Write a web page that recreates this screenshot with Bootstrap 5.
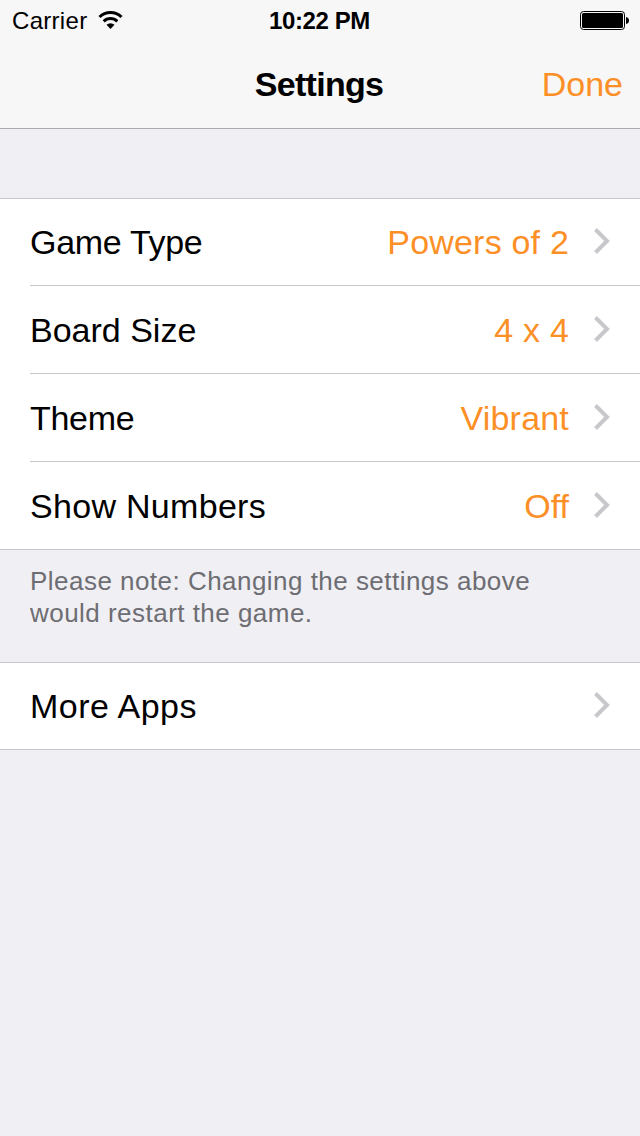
<!DOCTYPE html>
<html lang="en">
<head>
<meta charset="utf-8">
<meta name="viewport" content="width=device-width, initial-scale=1">
<title>Settings</title>
<link href="https://cdn.jsdelivr.net/npm/bootstrap@5.3.0/dist/css/bootstrap.min.css" rel="stylesheet">
<style>
body{background:#efeff4;font-family:"Liberation Sans",Arial,sans-serif;color:#000;min-height:1136px}
.topbar{background:#f7f7f7;height:129px;border-bottom:1px solid #acabb0;margin-bottom:69px}
.statusbar{height:40px;font-size:24px;line-height:42px;padding:0 11px 0 12px}
.carrier{letter-spacing:.3px}
.clock{letter-spacing:-.4px;padding-right:2px}
.titlebar{height:88px;line-height:88px;font-size:34px;padding-right:17px;padding-left:15px}
.title{letter-spacing:-.7px}
.side{flex:1 1 0}
.accent{color:#fc8f26}
.group{background:#fff;border:solid #c8c7cc;border-width:1px 0;padding-left:30px}
.item{height:88px;font-size:34px;line-height:89px;padding-right:30px;border-bottom:1px solid #c8c7cc}
.item:first-child{height:87px;line-height:87px}
.item:last-child{border-bottom:0;height:87px}
.item:only-child{height:86px}
.tight{letter-spacing:-.3px}
.loose{letter-spacing:.3px}
.looser{letter-spacing:.5px}
.setting{letter-spacing:.2px}
.note{font-size:26px;line-height:32px;color:#6d6d72;height:112px;padding:15px 30px 0;letter-spacing:.47px}
.chev{width:16px;height:26px;margin:30px 0 0 25px;fill:none;stroke:#c7c7cc;stroke-width:4}
.item:first-child .chev{margin-top:29px}
</style>
</head>
<body>
<header class="topbar">
  <div class="statusbar d-flex">
    <div class="side d-flex"><span class="carrier">Carrier</span>
      <svg class="ms-2 mt-2" width="28" height="24" viewBox="95 8 28 24"><path d="M99.500 17a15.800 15.800 0 0 1 22 0M103.700 21.300a9.800 9.800 0 0 1 13.600 0" fill="none" stroke="#000" stroke-width="3"/><path d="M106.500 24.700a6 6 0 0 1 8 0l-4 4.300z"/></svg>
    </div>
    <span class="clock fw-bold">10:22 PM</span>
    <div class="side d-flex justify-content-end"><svg width="49" height="40" viewBox="580 0 49 40"><rect x="580.500" y="11.500" width="44" height="18" rx="3" fill="none" stroke="#000"/><rect x="582" y="13" width="41" height="15" rx="1.500"/><path d="M626 17q3 .5 3 3.500t-3 3.500z"/></svg></div>
  </div>
  <div class="titlebar d-flex"><span class="side"></span><span class="title fw-bold">Settings</span><span class="side text-end accent">Done</span></div>
</header>
<main>
  <div class="group">
    <div class="item d-flex"><span class="tight">Game Type</span><span class="ms-auto accent setting">Powers of 2</span><svg class="chev" viewBox="0 0 16 26"><path d="M1.500 1.500L13 13 1.500 24.500"/></svg></div>
    <div class="item d-flex"><span>Board Size</span><span class="ms-auto accent setting">4 x 4</span><svg class="chev" viewBox="0 0 16 26"><path d="M1.500 1.500L13 13 1.500 24.500"/></svg></div>
    <div class="item d-flex"><span class="tight">Theme</span><span class="ms-auto accent setting">Vibrant</span><svg class="chev" viewBox="0 0 16 26"><path d="M1.500 1.500L13 13 1.500 24.500"/></svg></div>
    <div class="item d-flex"><span class="loose">Show Numbers</span><span class="ms-auto accent">Off</span><svg class="chev" viewBox="0 0 16 26"><path d="M1.500 1.500L13 13 1.500 24.500"/></svg></div>
  </div>
  <div class="note">Please note: Changing the settings above<br>would restart the game.</div>
  <div class="group">
    <div class="item d-flex"><span class="looser">More Apps</span><svg class="chev ms-auto" viewBox="0 0 16 26"><path d="M1.500 1.500L13 13 1.500 24.500"/></svg></div>
  </div>
</main>
<script src="https://cdn.jsdelivr.net/npm/bootstrap@5.3.0/dist/js/bootstrap.bundle.min.js"></script>
</body>
</html>
